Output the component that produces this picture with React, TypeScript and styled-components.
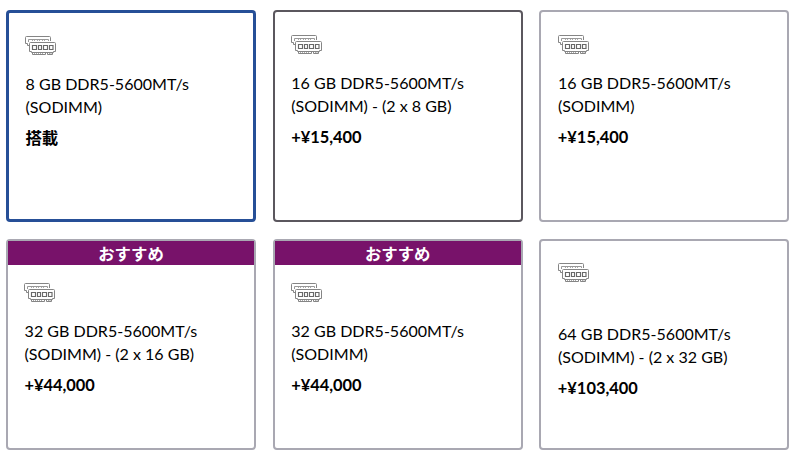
import React from 'react';
import styled, { createGlobalStyle } from 'styled-components';

const GlobalStyle = createGlobalStyle`
  * { box-sizing: border-box; }
  body { margin: 0; background: #fff; color: #000; font-family: Lato, "Noto Sans CJK JP", sans-serif; }
`;

type Tone = 'selected' | 'hover' | 'normal';
const tones: Record<Tone, string> = { selected: '#264f97', hover: '#5b575e', normal: '#a9a8b2' };

const Grid = styled.main`
  display: grid;
  grid-template-columns: 250px 250px 250px;
  grid-template-rows: 212px 211px;
  column-gap: 16.7px;
  row-gap: 17px;
  padding: 10px 0 0 6px;
`;

const Card = styled.article<{ $tone: Tone }>`
  border: ${p => (p.$tone === 'selected' ? 3 : 2)}px solid ${p => tones[p.$tone]};
  border-radius: 4px;
  background: #fff;
`;

const Ribbon = styled.div`
  height: 24px;
  background: #78126a;
  color: #fff;
  font-size: 16.4px;
  font-weight: 700;
  line-height: 26px;
  text-align: center;
`;

const Body = styled.div<{ $top: number }>`
  padding: ${p => p.$top}px 16px 0 16.3px;
`;

const Icon = styled.svg`
  display: block;
  width: 32px;
  height: 21px;
`;

const Name = styled.div<{ $gap: number }>`
  margin: ${p => p.$gap}px 0 0 0.3px;
  font-size: 16.05px;
  line-height: 23px;
`;

const Price = styled.div`
  margin: 8px 0 0 0.2px;
  font-size: 16.4px;
  font-weight: 700;
  line-height: 23px;
`;

const MemoryIcon = () => (
  <Icon viewBox="0 0 32 21" fill="none" stroke="#858585" strokeWidth="1">
    <path d="M4.5 10.5H2.5V8.5H.5V2.5Q.5 1.5 1.5 1.5H24.5Q25.5 1.5 25.5 2.5V6" />
    <path d="M3.5 7V4.5H23.5V6" stroke="#999" />
    <path d="M7.5 5V6M9.5 5V6M12.5 5V6M14.5 5V6M17.5 5V6M19.5 5V6" stroke="#aaa" />
    <path d="M5.5 7.5H29.5Q30.5 7.5 30.5 8.5V16.5H28.5V17.5H6.5V16.5H4.5V8.5Q4.5 7.5 5.5 7.5Z" />
    <path d="M7.5 10.5H11.5V14.5H7.5ZM13.5 10.5H16.5V14.5H13.5ZM18.5 10.5H22.5V14.5H18.5ZM24.5 10.5H28V14.5H24.5Z" stroke="#686868" strokeWidth="1.15" />
    <path d="M7.5 17.5V19.5H20.5V18M22.5 18V19.5H27.5V17.5" />
    <path d="M9.5 18V19M11.5 18V19M13.5 18V19M15.5 18V19M17.5 18V19M24.5 18V19M26 18V19" stroke="#aaa" />
  </Icon>
);

interface Option {
  lines: [string, string];
  price: string;
  tone: Tone;
  recommended?: boolean;
  top: number;
  gap: number;
}

const options: Option[] = [
  { lines: ['8 GB DDR5-5600MT/s', '(SODIMM)'], price: '搭載', tone: 'selected', top: 22, gap: 16 },
  { lines: ['16 GB DDR5-5600MT/s', '(SODIMM) - (2 x 8 GB)'], price: '+¥15,400', tone: 'hover', top: 22, gap: 16 },
  { lines: ['16 GB DDR5-5600MT/s', '(SODIMM)'], price: '+¥15,400', tone: 'normal', top: 22, gap: 16 },
  { lines: ['32 GB DDR5-5600MT/s', '(SODIMM) - (2 x 16 GB)'], price: '+¥44,000', tone: 'normal', recommended: true, top: 17, gap: 16 },
  { lines: ['32 GB DDR5-5600MT/s', '(SODIMM)'], price: '+¥44,000', tone: 'normal', recommended: true, top: 17, gap: 16 },
  { lines: ['64 GB DDR5-5600MT/s', '(SODIMM) - (2 x 32 GB)'], price: '+¥103,400', tone: 'normal', top: 21, gap: 39 },
];

export default function App() {
  return (
    <>
      <GlobalStyle />
      <Grid>
        {options.map((o, i) => (
          <Card key={i} $tone={o.tone}>
            {o.recommended && <Ribbon>おすすめ</Ribbon>}
            <Body $top={o.top}>
              <MemoryIcon />
              <Name $gap={o.gap}>
                {o.lines[0]}
                <br />
                {o.lines[1]}
              </Name>
              <Price>{o.price}</Price>
            </Body>
          </Card>
        ))}
      </Grid>
    </>
  );
}
